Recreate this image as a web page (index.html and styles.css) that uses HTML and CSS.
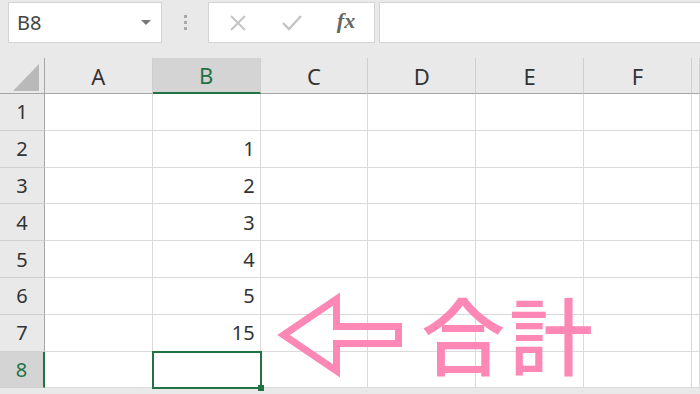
FILE: index.html
```html
<!DOCTYPE html>
<html lang="ja">
<head>
    <meta charset="UTF-8">
    <title>合計</title>
    <link rel="stylesheet" href="styles.css">
</head>
<body>
    <div class="app">
        <div class="formula-bar">
            <div class="name-box">
                <span class="cell-ref">B8</span>
                <span class="caret"></span>
            </div>
            <div class="grip"><i></i><i></i><i></i></div>
            <div class="fx-buttons">
                <span class="fx-btn">
                    <svg width="18" height="18" viewBox="0 0 18 18"><path d="M2 2 L16 16 M16 2 L2 16" stroke="#c4c4c4" stroke-width="2" fill="none"/></svg>
                </span>
                <span class="fx-btn">
                    <svg width="22" height="18" viewBox="0 0 22 18"><path d="M2 9 L8 15 L20 2" stroke="#c4c4c4" stroke-width="2.4" fill="none"/></svg>
                </span>
                <span class="fx-btn fx-label">fx</span>
            </div>
            <div class="formula-input"></div>
        </div>

        <div class="sheet">
            <!-- header row -->
            <div class="corner"><span class="corner-tri"></span></div>
            <div class="col-head">A</div>
            <div class="col-head active">B</div>
            <div class="col-head">C</div>
            <div class="col-head">D</div>
            <div class="col-head">E</div>
            <div class="col-head">F</div>
            <div class="col-head"></div>

            <div class="row-head">1</div>
            <div class="cell"></div><div class="cell"></div><div class="cell"></div><div class="cell"></div><div class="cell"></div><div class="cell"></div><div class="cell"></div>

            <div class="row-head">2</div>
            <div class="cell"></div><div class="cell num">1</div><div class="cell"></div><div class="cell"></div><div class="cell"></div><div class="cell"></div><div class="cell"></div>

            <div class="row-head">3</div>
            <div class="cell"></div><div class="cell num">2</div><div class="cell"></div><div class="cell"></div><div class="cell"></div><div class="cell"></div><div class="cell"></div>

            <div class="row-head">4</div>
            <div class="cell"></div><div class="cell num">3</div><div class="cell"></div><div class="cell"></div><div class="cell"></div><div class="cell"></div><div class="cell"></div>

            <div class="row-head">5</div>
            <div class="cell"></div><div class="cell num">4</div><div class="cell"></div><div class="cell"></div><div class="cell"></div><div class="cell"></div><div class="cell"></div>

            <div class="row-head">6</div>
            <div class="cell"></div><div class="cell num">5</div><div class="cell"></div><div class="cell"></div><div class="cell"></div><div class="cell"></div><div class="cell"></div>

            <div class="row-head">7</div>
            <div class="cell"></div><div class="cell num">15</div><div class="cell"></div><div class="cell"></div><div class="cell"></div><div class="cell"></div><div class="cell"></div>

            <div class="row-head active">8</div>
            <div class="cell"></div><div class="cell selected"></div><div class="cell"></div><div class="cell"></div><div class="cell"></div><div class="cell"></div><div class="cell"></div>
        </div>

        <!-- 注釈 -->
        <svg class="note-arrow" width="140" height="105" viewBox="0 0 140 105">
            <polygon points="13.5,50 66.5,14 66.5,41.5 128.5,41.5 128.5,58.5 66.5,58.5 66.5,86" fill="none" stroke="#fd87b5" stroke-width="7" stroke-linejoin="miter" stroke-miterlimit="10"/>
        </svg>
        <div class="note-text">合計</div>
    </div>
</body>
</html>
```

FILE: styles.css
```css
body {
    margin: 0;
    padding: 0;
    font-family: 'Noto Sans', 'Noto Sans CJK JP', sans-serif;
    color: #333;
    background-color: #fff;
    overflow: hidden;
}

.app {
    position: relative;
    width: 700px;
    height: 394px;
    overflow: hidden;
    background-color: #e9e9e9;
}

/* 数式バー */
.formula-bar {
    display: flex;
    height: 58px;
    padding-top: 2px;
    box-sizing: border-box;
}

.name-box {
    width: 154px;
    height: 41px;
    margin-left: 8px;
    box-sizing: border-box;
    background-color: #fff;
    border: 1px solid #d4d4d4;
    display: flex;
    align-items: center;
    justify-content: space-between;
    padding: 0 10px 0 8px;
}

.cell-ref {
    font-size: 20px;
    color: #444;
}

.caret {
    width: 0;
    height: 0;
    border-left: 5px solid transparent;
    border-right: 5px solid transparent;
    border-top: 5px solid #777;
}

.grip {
    width: 46px;
    display: flex;
    flex-direction: column;
    align-items: center;
    justify-content: center;
    gap: 3px;
    height: 41px;
}

.grip i {
    display: block;
    width: 3px;
    height: 3px;
    background-color: #a8a8a8;
}

.fx-buttons {
    width: 167px;
    height: 41px;
    box-sizing: border-box;
    background-color: #fff;
    border: 1px solid #d4d4d4;
    display: flex;
    align-items: center;
    padding-left: 2px;
}

.fx-btn {
    width: 54px;
    display: flex;
    justify-content: center;
    align-items: center;
}

.fx-label {
    font-family: 'Liberation Serif', serif;
    font-style: italic;
    font-weight: bold;
    font-size: 22px;
    color: #666;
    padding-bottom: 3px;
}

.formula-input {
    flex-grow: 1;
    margin-left: 4px;
    height: 41px;
    box-sizing: border-box;
    background-color: #fff;
    border: 1px solid #d4d4d4;
    border-right: none;
}

/* シート */
.sheet {
    display: grid;
    grid-template-columns: 45px repeat(6, 107.8px) 1fr;
    grid-template-rows: 36px repeat(8, 36.8px);
    background-color: #fff;
}

.corner,
.col-head,
.row-head {
    background-color: #e9e9e9;
    box-sizing: border-box;
    display: flex;
    align-items: center;
    justify-content: center;
    color: #333;
}

.corner {
    border-right: 1px solid #a6a6a6;
    border-bottom: 1px solid #a6a6a6;
    position: relative;
}

.corner-tri {
    position: absolute;
    right: 5px;
    bottom: 2px;
    width: 0;
    height: 0;
    border-left: 26px solid transparent;
    border-bottom: 27px solid #b9b9b9;
}

.col-head {
    font-size: 22px;
    border-right: 1px solid #cfcfcf;
    border-bottom: 1px solid #a6a6a6;
}

.col-head.active {
    background-color: #d4d4d4;
    color: #217346;
    border-bottom: 2px solid #217346;
}

.row-head {
    font-size: 20px;
    border-right: 1px solid #a6a6a6;
    border-bottom: 1px solid #cfcfcf;
}

.row-head.active {
    background-color: #d4d4d4;
    color: #217346;
    border-right: 2px solid #217346;
}

.cell {
    box-sizing: border-box;
    border-right: 1px solid #dadada;
    border-bottom: 1px solid #dadada;
    font-size: 20px;
    color: #333;
    display: flex;
    align-items: center;
}

.cell.num {
    justify-content: flex-end;
    padding-right: 5px;
}

.cell.selected {
    position: relative;
    outline: 2px solid #217346;
    outline-offset: -1px;
}

.cell.selected::after {
    content: "";
    position: absolute;
    right: -4px;
    bottom: -4px;
    width: 6px;
    height: 6px;
    background-color: #217346;
}

/* 注釈 */
.note-arrow {
    position: absolute;
    left: 270px;
    top: 285px;
}

.note-text {
    position: absolute;
    left: 421px;
    top: 291px;
    font-family: 'Noto Sans CJK JP', sans-serif;
    font-size: 84px;
    font-weight: 500;
    line-height: 1;
    letter-spacing: 4px;
    color: #fd87b5;
}
```
